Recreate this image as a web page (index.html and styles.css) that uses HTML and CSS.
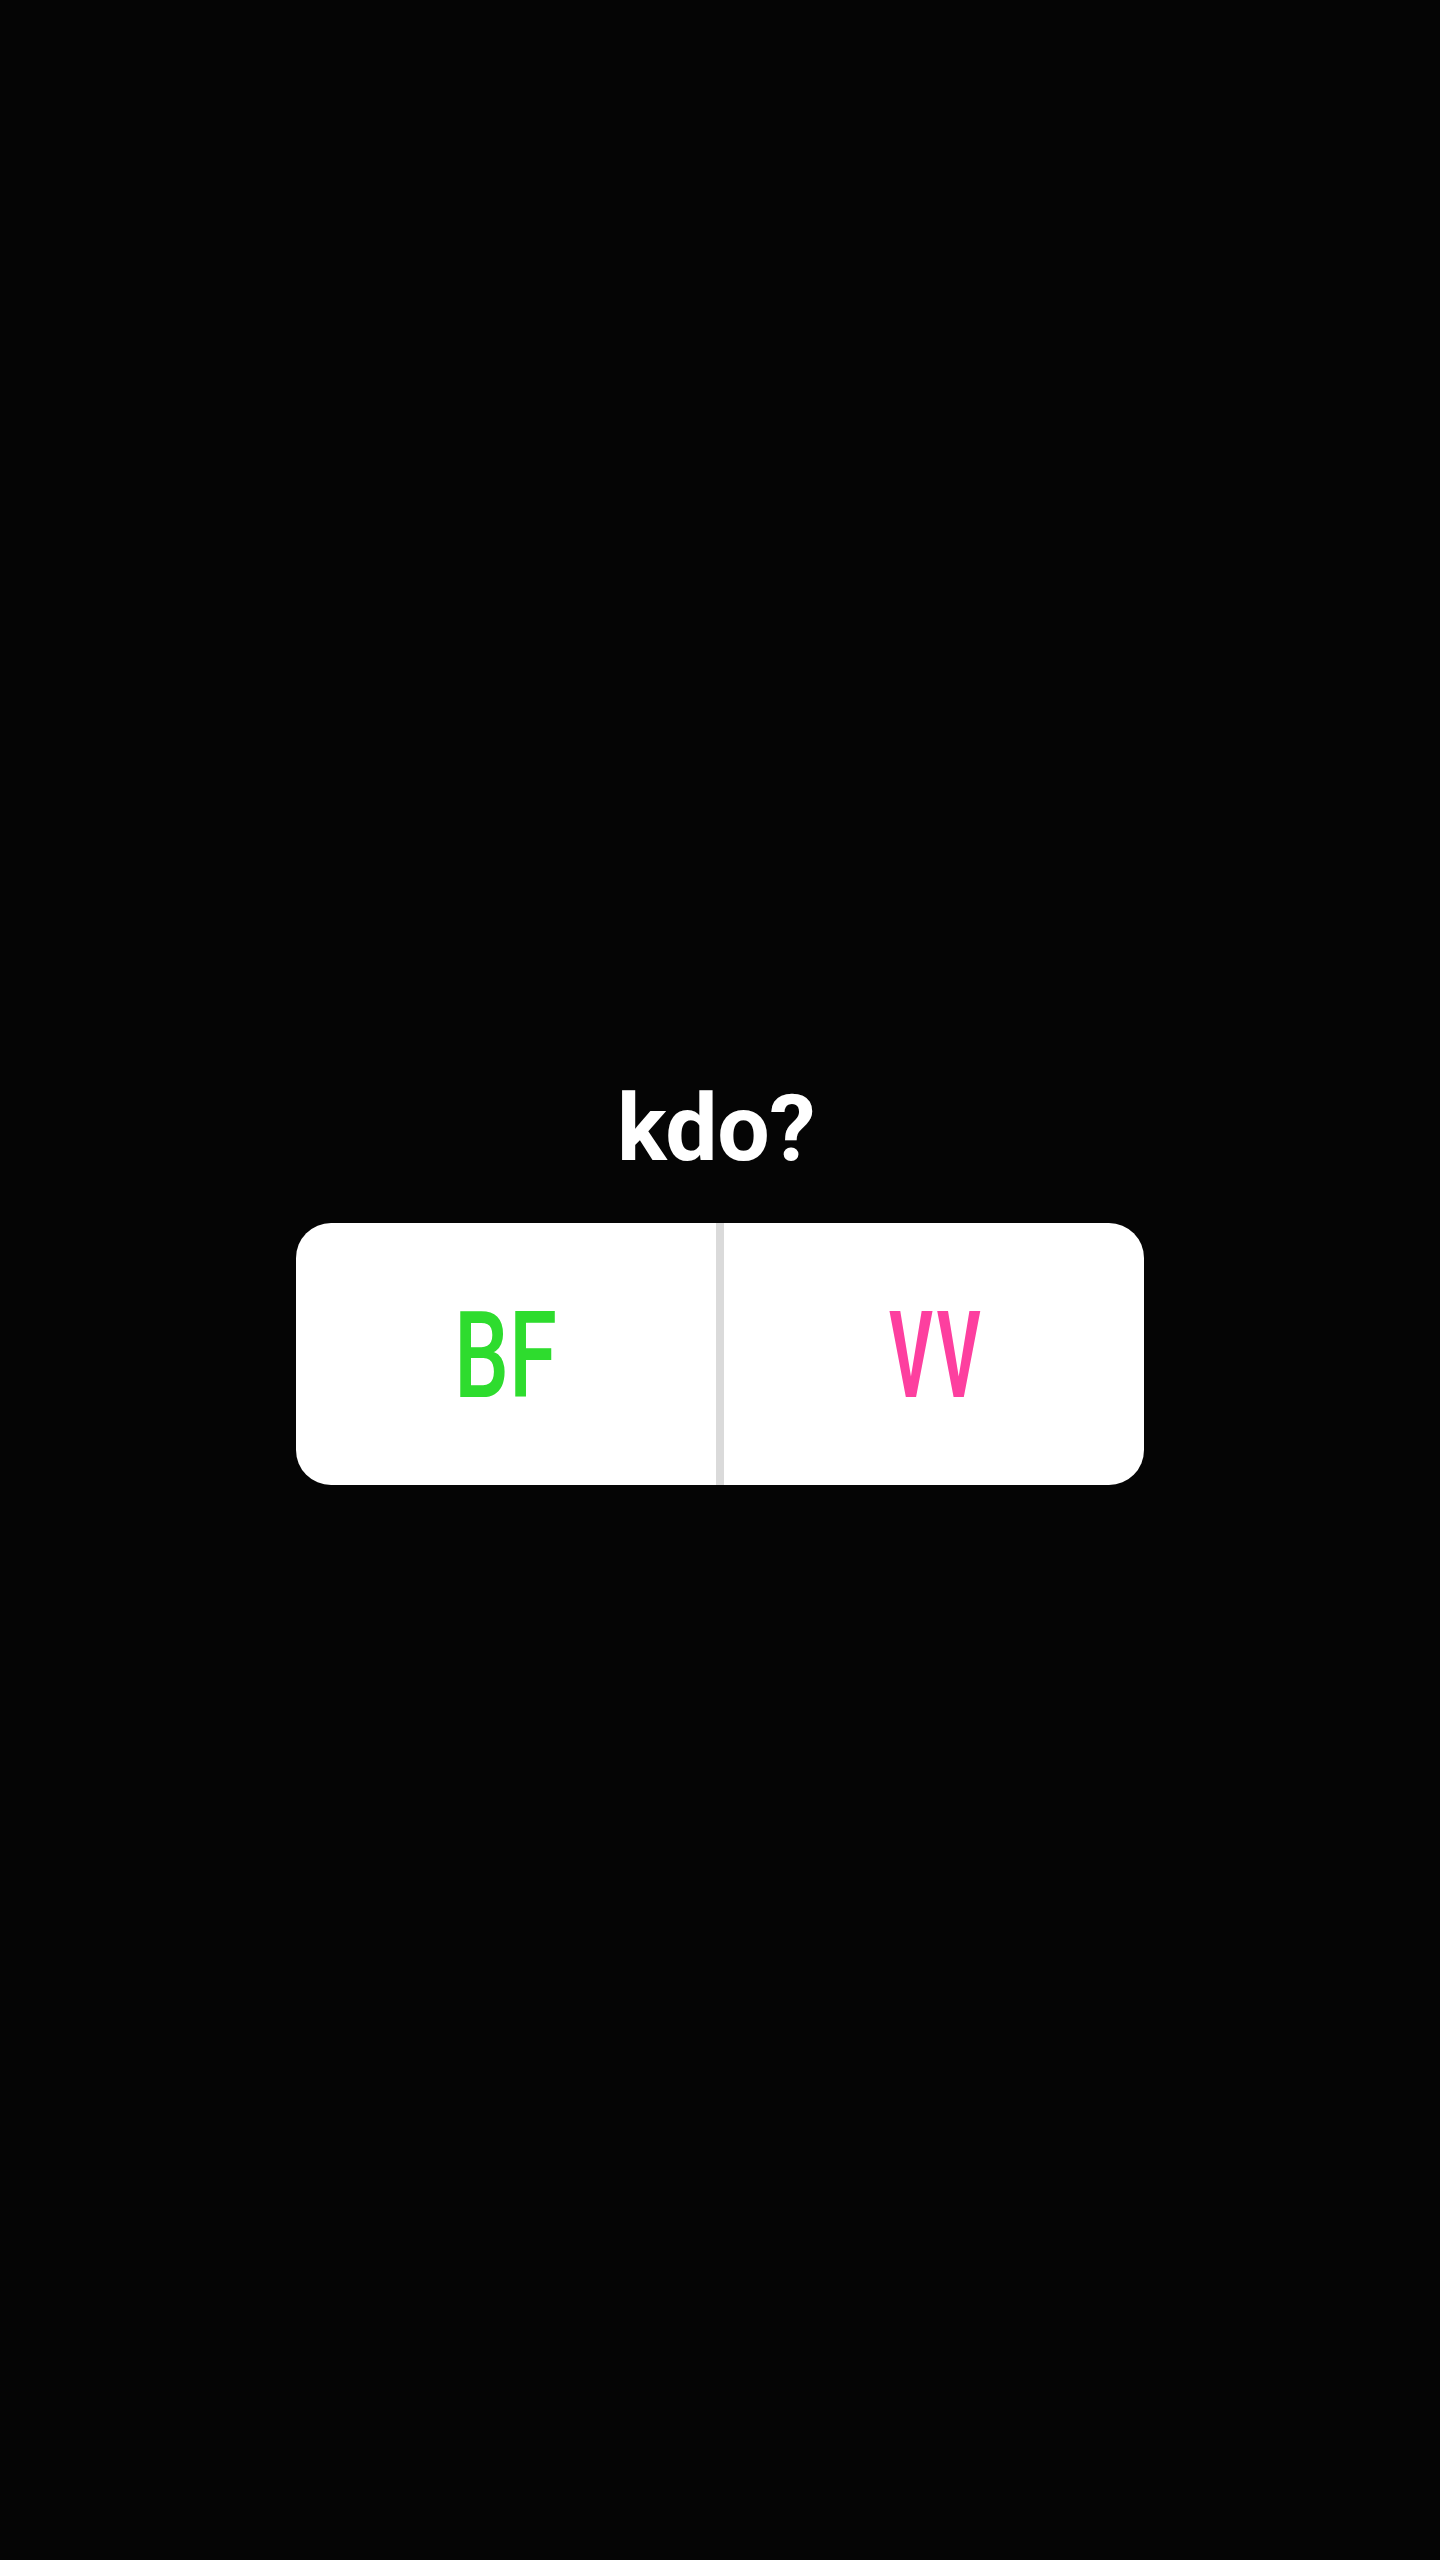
FILE: index.html
```html
<!DOCTYPE html>
<html lang="cs">
<head>
<meta charset="utf-8">
<title>kdo?</title>
<link rel="stylesheet" href="styles.css">
</head>
<body>
<main class="story">
  <h1 class="question">kdo?</h1>
  <div class="poll">
    <div class="option option-left"><span class="label label-green">BF</span></div>
    <div class="divider"></div>
    <div class="option option-right"><span class="label label-pink">VV</span></div>
  </div>
</main>
</body>
</html>
```

FILE: styles.css
```css
html, body {
  margin: 0;
  padding: 0;
}
body {
  background: #050505;
  min-height: 2560px;
  font-family: Roboto, "Liberation Sans", sans-serif;
}
.story {
  display: flex;
  flex-direction: column;
  align-items: center;
  padding-top: 1082px;
}
.question {
  margin: 0 0 48px 0;
  color: #ffffff;
  font-size: 93px;
  line-height: 1;
  font-weight: 700;
  letter-spacing: -0.5px;
  transform: translateX(-4px);
}
.poll {
  width: 848px;
  height: 262px;
  background: #ffffff;
  border-radius: 35px;
  display: flex;
  overflow: hidden;
}
.option {
  flex: 1;
  display: flex;
  align-items: center;
  justify-content: center;
}
.divider {
  width: 8px;
  background: #dadada;
}
.label {
  display: inline-block;
  font-size: 121px;
  line-height: 1;
  font-weight: 500;
  transform: translateY(2px) scaleX(0.72);
}
.label-green {
  color: #2edc2e;
}
.label-pink {
  color: #fd3f9f;
  font-weight: 700;
  letter-spacing: 8px;
  transform: translate(3px, 2px) scaleX(0.55);
}
```
